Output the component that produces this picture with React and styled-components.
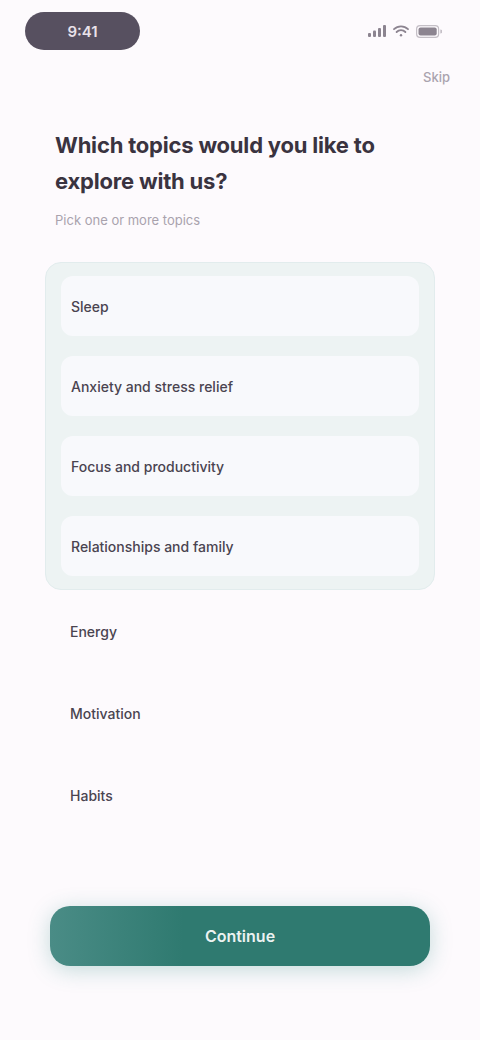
import React, { useState } from "react";
import styled, { createGlobalStyle } from "styled-components";

const GlobalStyle = createGlobalStyle`
  * { box-sizing: border-box; }
  body {
    margin: 0;
    background: #fdfafd;
    font-family: Inter, "Noto Sans", sans-serif;
    color: #3b3540;
  }
`;

const Page = styled.div`
  width: 480px;
  min-height: 1040px;
  background: #fdfafd;
  display: flex;
  flex-direction: column;
`;

const StatusBar = styled.div`
  height: 62px;
  padding: 0 38px 0 25px;
  display: flex;
  align-items: center;
  justify-content: space-between;
`;

const TimePill = styled.div`
  width: 115px;
  height: 38px;
  border-radius: 19px;
  background: #575060;
  color: #e9e2ea;
  font-size: 15px;
  font-weight: 600;
  display: flex;
  align-items: center;
  justify-content: center;
`;

const StatusIcons = styled.div`
  display: flex;
  align-items: center;
  gap: 7px;
  color: #8c8490;
`;

const TopRow = styled.div`
  height: 30px;
  padding: 0 30px;
  display: flex;
  align-items: center;
  justify-content: flex-end;
`;

const SkipButton = styled.button`
  border: 0;
  background: none;
  padding: 0;
  font: inherit;
  font-size: 13px;
  font-weight: 500;
  color: #aaa3ae;
  cursor: pointer;
`;

const Content = styled.div`
  padding: 0 45px;
  display: flex;
  flex-direction: column;
`;

const Header = styled.div`
  padding: 0 10px;
  margin-top: 35px;
`;

const Title = styled.h1`
  margin: 0;
  font-size: 22px;
  line-height: 36px;
  font-weight: 700;
  color: #3a3340;
  letter-spacing: -0.2px;
`;

const Subtitle = styled.p`
  margin: 12px 0 0;
  font-size: 13px;
  line-height: 18px;
  color: #a9a2ad;
`;

const SelectedCard = styled.div`
  margin-top: 33px;
  padding: 13px 15px;
  background: #edf3f3;
  border: 1px solid #e2eced;
  border-radius: 16px;
  display: flex;
  flex-direction: column;
  gap: 20px;
`;

const Option = styled.button`
  height: ${({ $tall }) => ($tall ? "82px" : "60px")};
  width: 100%;
  padding: 0 10px;
  border: 0;
  border-radius: 12px;
  background: ${({ $selected }) => ($selected ? "#f8f9fc" : "transparent")};
  display: flex;
  align-items: center;
  font: inherit;
  font-size: 14px;
  font-weight: 500;
  color: #4a4450;
  text-align: left;
  cursor: pointer;
`;

const OtherList = styled.div`
  padding: 0 15px;
  display: flex;
  flex-direction: column;
`;

const PrimaryButton = styled.button`
  margin: 70px 5px 0;
  height: 60px;
  border: 0;
  border-radius: 20px;
  background: linear-gradient(90deg, #4a8c86 0%, #2f7a70 35%, #2f7a70 100%);
  box-shadow: 0 4px 22px rgba(47, 140, 128, 0.28);
  color: rgba(255, 255, 255, 0.92);
  font: inherit;
  font-size: 16px;
  font-weight: 600;
  cursor: pointer;
`;

const Signal = () => (
  <svg width="18" height="12" viewBox="0 0 18 12" fill="currentColor">
    <rect x="0" y="8" width="3" height="4" rx="1" />
    <rect x="5" y="5.5" width="3" height="6.5" rx="1" />
    <rect x="10" y="3" width="3" height="9" rx="1" />
    <rect x="15" y="0" width="3" height="12" rx="1" />
  </svg>
);

const Wifi = () => (
  <svg width="16" height="12" viewBox="0 0 16 12" fill="none" stroke="currentColor" strokeWidth="1.8" strokeLinecap="round">
    <path d="M1 4.2a10 10 0 0 1 14 0" />
    <path d="M3.6 7a6.2 6.2 0 0 1 8.8 0" />
    <circle cx="8" cy="10.2" r="1.2" fill="currentColor" stroke="none" />
  </svg>
);

const Battery = () => (
  <svg width="26" height="13" viewBox="0 0 26 13" fill="none">
    <rect x="0.6" y="0.6" width="22" height="11.8" rx="3.4" stroke="currentColor" strokeWidth="1.2" opacity="0.5" />
    <rect x="2.5" y="2.5" width="18.2" height="8" rx="2" fill="currentColor" />
    <path d="M24.3 4.5v4a2 2 0 0 0 0-4z" fill="currentColor" opacity="0.5" />
  </svg>
);

const focusAreas = [
  "Sleep",
  "Anxiety and stress relief",
  "Focus and productivity",
  "Relationships and family",
];

const otherAreas = ["Energy", "Motivation", "Habits"];

export default function App() {
  const [selected, setSelected] = useState(focusAreas);

  const toggle = (item) =>
    setSelected((prev) =>
      prev.includes(item) ? prev.filter((x) => x !== item) : [...prev, item]
    );

  return (
    <Page>
      <GlobalStyle />
      <StatusBar>
        <TimePill>9:41</TimePill>
        <StatusIcons>
          <Signal />
          <Wifi />
          <Battery />
        </StatusIcons>
      </StatusBar>
      <TopRow>
        <SkipButton>Skip</SkipButton>
      </TopRow>
      <Content>
        <Header>
          <Title>
            Which topics would you like to
            <br />
            explore with us?
          </Title>
          <Subtitle>Pick one or more topics</Subtitle>
        </Header>
        <SelectedCard>
          {focusAreas.map((item) => (
            <Option key={item} $selected={selected.includes(item)} onClick={() => toggle(item)}>
              {item}
            </Option>
          ))}
        </SelectedCard>
        <OtherList>
          {otherAreas.map((item) => (
            <Option key={item} $tall $selected={selected.includes(item)} onClick={() => toggle(item)}>
              {item}
            </Option>
          ))}
        </OtherList>
        <PrimaryButton>Continue</PrimaryButton>
      </Content>
    </Page>
  );
}
